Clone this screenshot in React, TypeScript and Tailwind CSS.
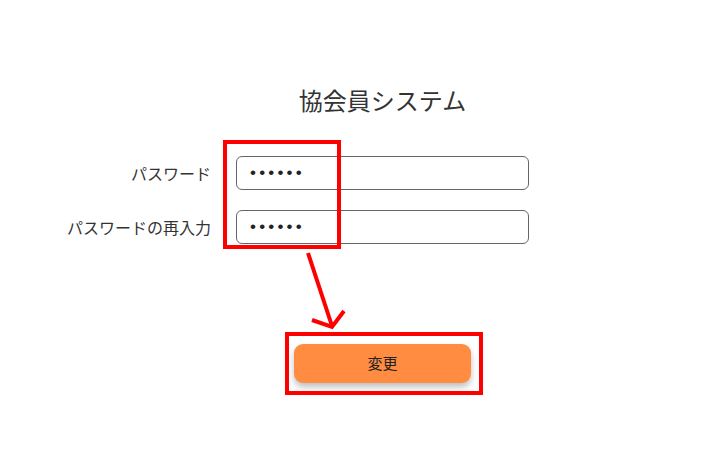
export default function App() {
  const font = { fontFamily: '"Noto Sans CJK JP", "Noto Sans", sans-serif' }
  return (
    <div className="relative w-[727px] h-[469px] bg-white overflow-hidden" style={font}>
      <div className="flex flex-col items-center pl-[38px] pt-[84px]">
        <h1 className="text-[24px] leading-[32px] text-[#333]">協会員システム</h1>

        <div className="mt-[40px] grid grid-cols-[1fr_293px_1fr] gap-x-[25px] gap-y-[20px] w-full">
          <label className="self-center text-right text-[16px] text-[#333]">パスワード</label>
          <input
            type="text"
            value="••••••"
            readOnly
            className="h-[34px] rounded-[6px] border border-[#666] px-[13px] font-['Liberation_Sans'] text-[17px] tracking-[3.2px] text-[#222] outline-none"
          />
          <div />
          <label className="self-center text-right text-[16px] text-[#333]">パスワードの再入力</label>
          <input
            type="text"
            value="••••••"
            readOnly
            className="h-[34px] rounded-[6px] border border-[#666] px-[13px] font-['Liberation_Sans'] text-[17px] tracking-[3.2px] text-[#222] outline-none"
          />
          <div />
        </div>

        <button className="mt-[100px] w-[177px] h-[39px] rounded-[9px] bg-[#ff8c41] text-[15px] text-[#222] shadow-[0_4px_6px_rgba(0,0,0,0.25)]">
          変更
        </button>
      </div>

      {/* annotations */}
      <div className="absolute left-[223px] top-[140px] w-[118px] h-[109px] border-4 border-[#ff0000]" />
      <div className="absolute left-[285px] top-[332px] w-[198px] h-[63px] border-4 border-[#ff0000]" />
      <svg className="absolute left-0 top-0" width="727" height="469">
        <g stroke="#ff0000" strokeWidth="4" fill="none" strokeLinecap="butt">
          <line x1="308" y1="253" x2="332" y2="326" />
          <polyline points="312,320 332,327 344,311" />
        </g>
      </svg>
    </div>
  )
}
